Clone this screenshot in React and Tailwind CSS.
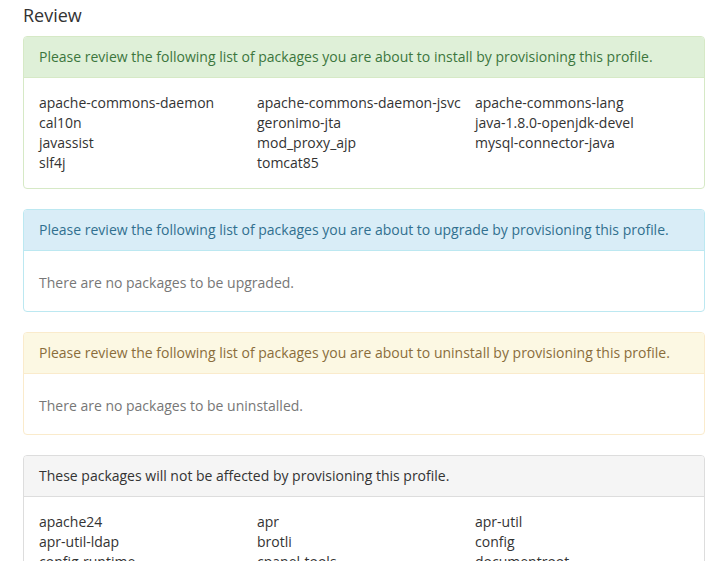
import React from "react";

const installPkgs = [
  "apache-commons-daemon",
  "apache-commons-daemon-jsvc",
  "apache-commons-lang",
  "cal10n",
  "geronimo-jta",
  "java-1.8.0-openjdk-devel",
  "javassist",
  "mod_proxy_ajp",
  "mysql-connector-java",
  "slf4j",
  "tomcat85",
];

const unaffected = [
  "apache24",
  "apr",
  "apr-util",
  "apr-util-ldap",
  "brotli",
  "config",
  "config-runtime",
  "cpanel-tools",
  "documentroot",
  "ea-apache24",
  "ea-php",
  "expat",
];

function PkgGrid({ items }) {
  return (
    <div className="grid grid-cols-[218px_218px_1fr] text-[14px] leading-[20px] text-[#333]">
      {items.map((p) => (
        <div key={p}>{p}</div>
      ))}
    </div>
  );
}

function Panel({ border, headBg, headColor, title, children }) {
  return (
    <div className={`mb-[20px] rounded-[4px] border bg-white ${border}`}>
      <div
        className={`rounded-t-[3px] border-b px-[15px] py-[10px] text-[14px] leading-[20px] ${border} ${headBg} ${headColor}`}
      >
        {title}
      </div>
      {children}
    </div>
  );
}

export default function App() {
  return (
    <div
      className="h-[561px] overflow-hidden bg-white pl-[23px] pr-[13px]"
      style={{ fontFamily: '"Open Sans", "Noto Sans", sans-serif' }}
    >
      <h3 className="mt-[5px] mb-[11px] text-[18px] leading-[20px] text-[#333]">Review</h3>

      <Panel
        border="border-[#d6e9c6]"
        headBg="bg-[#dff0d8]"
        headColor="text-[#3c763d]"
        title="Please review the following list of packages you are about to install by provisioning this profile."
      >
        <div className="p-[15px]">
          <PkgGrid items={installPkgs} />
        </div>
      </Panel>

      <Panel
        border="border-[#bce8f1]"
        headBg="bg-[#d9edf7]"
        headColor="text-[#31708f]"
        title="Please review the following list of packages you are about to upgrade by provisioning this profile."
      >
        <div className="px-[15px] pt-[22px] pb-[18px] text-[14px] leading-[20px] text-[#777]">
          There are no packages to be upgraded.
        </div>
      </Panel>

      <Panel
        border="border-[#faebcc]"
        headBg="bg-[#fcf8e3]"
        headColor="text-[#8a6d3b]"
        title="Please review the following list of packages you are about to uninstall by provisioning this profile."
      >
        <div className="px-[15px] pt-[22px] pb-[18px] text-[14px] leading-[20px] text-[#777]">
          There are no packages to be uninstalled.
        </div>
      </Panel>

      <Panel
        border="border-[#ddd]"
        headBg="bg-[#f5f5f5]"
        headColor="text-[#333]"
        title="These packages will not be affected by provisioning this profile."
      >
        <div className="p-[15px]">
          <PkgGrid items={unaffected} />
        </div>
      </Panel>
    </div>
  );
}
